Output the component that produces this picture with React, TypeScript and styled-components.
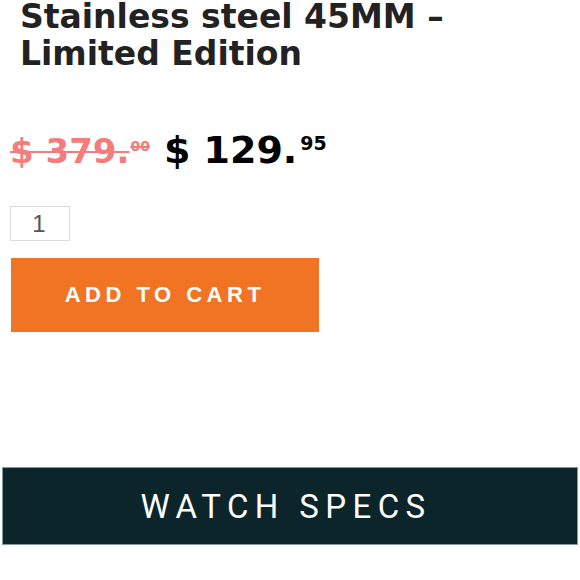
import styled, { createGlobalStyle } from 'styled-components';

const GlobalStyle = createGlobalStyle`
  html, body {
    margin: 0;
    padding: 0;
    background: #fff;
  }
`;

const Page = styled.div`
  width: 580px;
  height: 580px;
  overflow: hidden;
  display: flex;
  flex-direction: column;
`;

const Summary = styled.div`
  padding: 0 10px;
  display: flex;
  flex-direction: column;
`;

const Title = styled.h1`
  margin: -2px 0 0 10px;
  font-family: 'DejaVu Sans', Verdana, sans-serif;
  font-weight: 700;
  font-size: 33px;
  line-height: 37px;
  color: #222;
`;

const PriceRow = styled.div`
  margin-top: 56px;
  display: flex;
  align-items: baseline;
  gap: 14px;
  font-family: 'DejaVu Sans', Verdana, sans-serif;
  font-weight: 700;
`;

const Price = styled.span<{ $old?: boolean }>`
  font-size: ${p => (p.$old ? '34px' : '38px')};
  color: ${p => (p.$old ? '#f47c7c' : '#000')};
  text-decoration: ${p => (p.$old ? 'line-through' : 'none')};
  text-decoration-thickness: 2px;
  white-space: nowrap;
`;

const Cents = styled.sup<{ $old?: boolean }>`
  display: inline-block;
  margin-left: ${p => (p.$old ? '1px' : '3px')};
  font-size: ${p => (p.$old ? '14px' : '19px')};
  line-height: 1;
  vertical-align: ${p => (p.$old ? '12px' : '13px')};
  text-decoration: ${p => (p.$old ? 'line-through' : 'none')};
  text-decoration-thickness: 1.5px;
`;

const QtyInput = styled.input`
  margin-top: 34px;
  width: 60px;
  height: 35px;
  box-sizing: border-box;
  border: 1px solid #dcdcdc;
  padding: 0 2px 0 0;
  text-align: center;
  font-family: 'Liberation Sans', Arial, sans-serif;
  font-size: 24px;
  color: #555;
  outline: none;
`;

const CartButton = styled.button`
  margin: 17px 0 0 1px;
  width: 308px;
  height: 74px;
  border: 0;
  background: #f07424;
  color: #fff;
  font-family: 'Liberation Sans', Arial, sans-serif;
  font-weight: 700;
  font-size: 22px;
  letter-spacing: 4.5px;
  text-transform: uppercase;
  cursor: pointer;
`;

const SpecsBar = styled.div`
  margin: 135px 2px 0;
  height: 78px;
  box-sizing: border-box;
  border: 1px solid #7f9c9c;
  background: #0b252b;
  display: flex;
  align-items: center;
  justify-content: center;
  color: #fff;
  font-family: Roboto, 'Liberation Sans', sans-serif;
  font-size: 33px;
  letter-spacing: 6.4px;
  padding-right: 8px;
`;

export default function App() {
  return (
    <Page>
      <GlobalStyle />
      <Summary>
        <Title>Stainless steel 45MM – Limited Edition</Title>
        <PriceRow>
          <Price $old>
            $ 379.<Cents $old>00</Cents>
          </Price>
          <Price>
            $ 129.<Cents>95</Cents>
          </Price>
        </PriceRow>
        <div>
          <QtyInput type="text" inputMode="numeric" defaultValue="1" />
        </div>
        <div>
          <CartButton>Add to cart</CartButton>
        </div>
      </Summary>
      <SpecsBar>WATCH SPECS</SpecsBar>
    </Page>
  );
}
